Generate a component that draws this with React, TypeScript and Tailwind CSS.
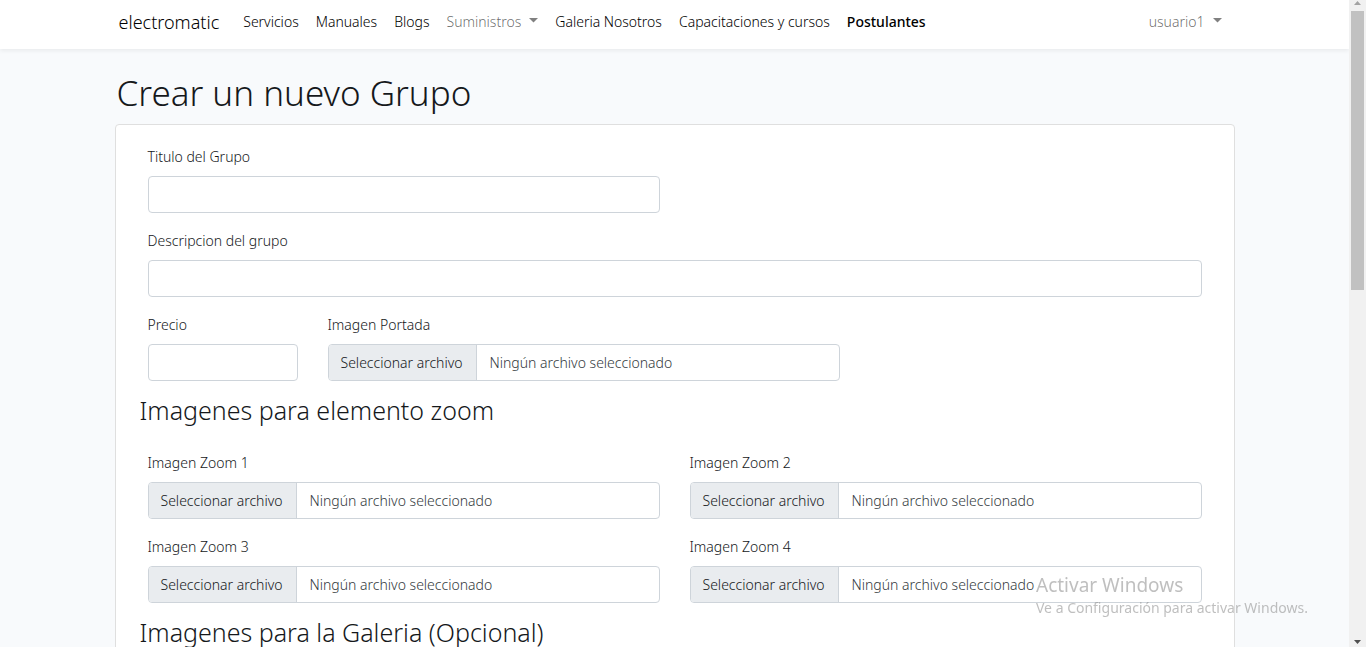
import { useId } from 'react';

type FieldProps = { label: string; className?: string };

function TextField({ label, className = '' }: FieldProps) {
  const id = useId();
  return (
    <div className={className}>
      <label htmlFor={id} className="mb-2 block">{label}</label>
      <input
        id={id}
        type="text"
        className="block h-[37px] w-full rounded border border-[#ced4da] bg-white px-3 outline-none focus:border-[#a1cbef]"
      />
    </div>
  );
}

function FileField({ label, className = '' }: FieldProps) {
  const id = useId();
  return (
    <div className={className}>
      <label htmlFor={id} className="mb-2 block">{label}</label>
      <label
        htmlFor={id}
        className="relative flex h-[37px] items-center overflow-hidden rounded border border-[#ced4da] bg-white"
      >
        <input id={id} type="file" className="sr-only" />
        <span className="flex h-full items-center border-r border-[#ced4da] bg-[#e9ecef] pr-[13px] pl-3">
          Seleccionar archivo
        </span>
        <span className="px-[13px] text-[#343a40]">Ningún archivo seleccionado</span>
      </label>
    </div>
  );
}

function Caret() {
  return (
    <svg width="9" height="5" viewBox="0 0 9 5" className="mb-[2px] fill-[#808080]" aria-hidden="true">
      <path d="M0 0h9L4.5 4.5z" />
    </svg>
  );
}

function Dropdown({ label }: { label: string }) {
  return (
    <button type="button" className="flex items-center gap-2 text-black/60">
      {label}
      <Caret />
    </button>
  );
}

function Heading({ children }: { children: string }) {
  return <h2 className="mb-7 text-[25px] leading-[26px]">{children}</h2>;
}

function NavBar() {
  return (
    <nav className="relative bg-white shadow-[0_2px_4px_rgba(0,0,0,0.06)]">
      <div className="mx-auto flex h-[49px] max-w-[1120px] items-center pr-[13px] pb-[6px] pl-1 text-black">
        <a href="#inicio" className="mr-6 text-lg leading-7">electromatic</a>
        <div className="flex flex-1 items-center gap-[17px] whitespace-nowrap">
          <a href="#servicios">Servicios</a>
          <a href="#manuales">Manuales</a>
          <a href="#blogs">Blogs</a>
          <Dropdown label="Suministros" />
          <a href="#galeria">Galeria Nosotros</a>
          <a href="#capacitaciones">Capacitaciones y cursos</a>
          <a href="#postulantes" className="font-medium">Postulantes</a>
        </div>
        <Dropdown label="usuario1" />
      </div>
    </nav>
  );
}

function ScrollTrack() {
  return (
    <div className="flex w-[17px] shrink-0 flex-col items-center bg-[#f1f1f1]" aria-hidden="true">
      <svg width="17" height="11" viewBox="0 0 17 11" className="shrink-0 fill-[#a3a3a3]">
        <path d="M5 5h7L8.500 1z" />
      </svg>
      <div className="h-[279px] w-[13px] shrink-0 bg-[#c1c1c1]" />
      <div className="flex-1" />
      <svg width="17" height="11" viewBox="0 0 17 11" className="shrink-0 fill-[#505050]">
        <path d="M5 4h7L8.500 8z" />
      </svg>
    </div>
  );
}

export default function App() {
  return (
    <div className="flex h-screen font-['Noto_Sans',sans-serif] text-sm leading-[23px] font-light text-[#15181b]">
      <div className="min-w-0 flex-1 overflow-y-auto bg-[#f8fafc] [scrollbar-width:none]">
        <NavBar />
        <main className="mx-auto max-w-[1120px] pt-6">
          <h1 className="mb-[11px] pl-[2px] text-[35px] leading-10">Crear un nuevo Grupo</h1>
          <form className="rounded border border-[#dfdfdf] bg-white px-6 pt-5 pb-6">
            <div className="grid grid-cols-2 gap-x-[30px] gap-y-4 px-2 pb-4">
              <TextField label="Titulo del Grupo" />
              <TextField label="Descripcion del grupo" className="col-span-2" />
              <div className="col-span-2 flex gap-[30px]">
                <TextField label="Precio" className="w-[150px]" />
                <FileField label="Imagen Portada" className="w-[512px]" />
              </div>
            </div>
            <Heading>Imagenes para elemento zoom</Heading>
            <div className="grid grid-cols-2 gap-x-[30px] gap-y-4 px-2 pb-4">
              <FileField label="Imagen Zoom 1" />
              <FileField label="Imagen Zoom 2" />
              <FileField label="Imagen Zoom 3" />
              <FileField label="Imagen Zoom 4" />
            </div>
            <Heading>Imagenes para la Galeria (Opcional)</Heading>
          </form>
        </main>
      </div>
      <ScrollTrack />
      <div className="pointer-events-none fixed right-[54px] bottom-7 w-[276px] whitespace-nowrap text-[#8a8a8a]/55">
        <p className="text-[19px] leading-[22px] font-normal">Activar Windows</p>
        <p className="font-normal">Ve a Configuración para activar Windows.</p>
      </div>
    </div>
  );
}
